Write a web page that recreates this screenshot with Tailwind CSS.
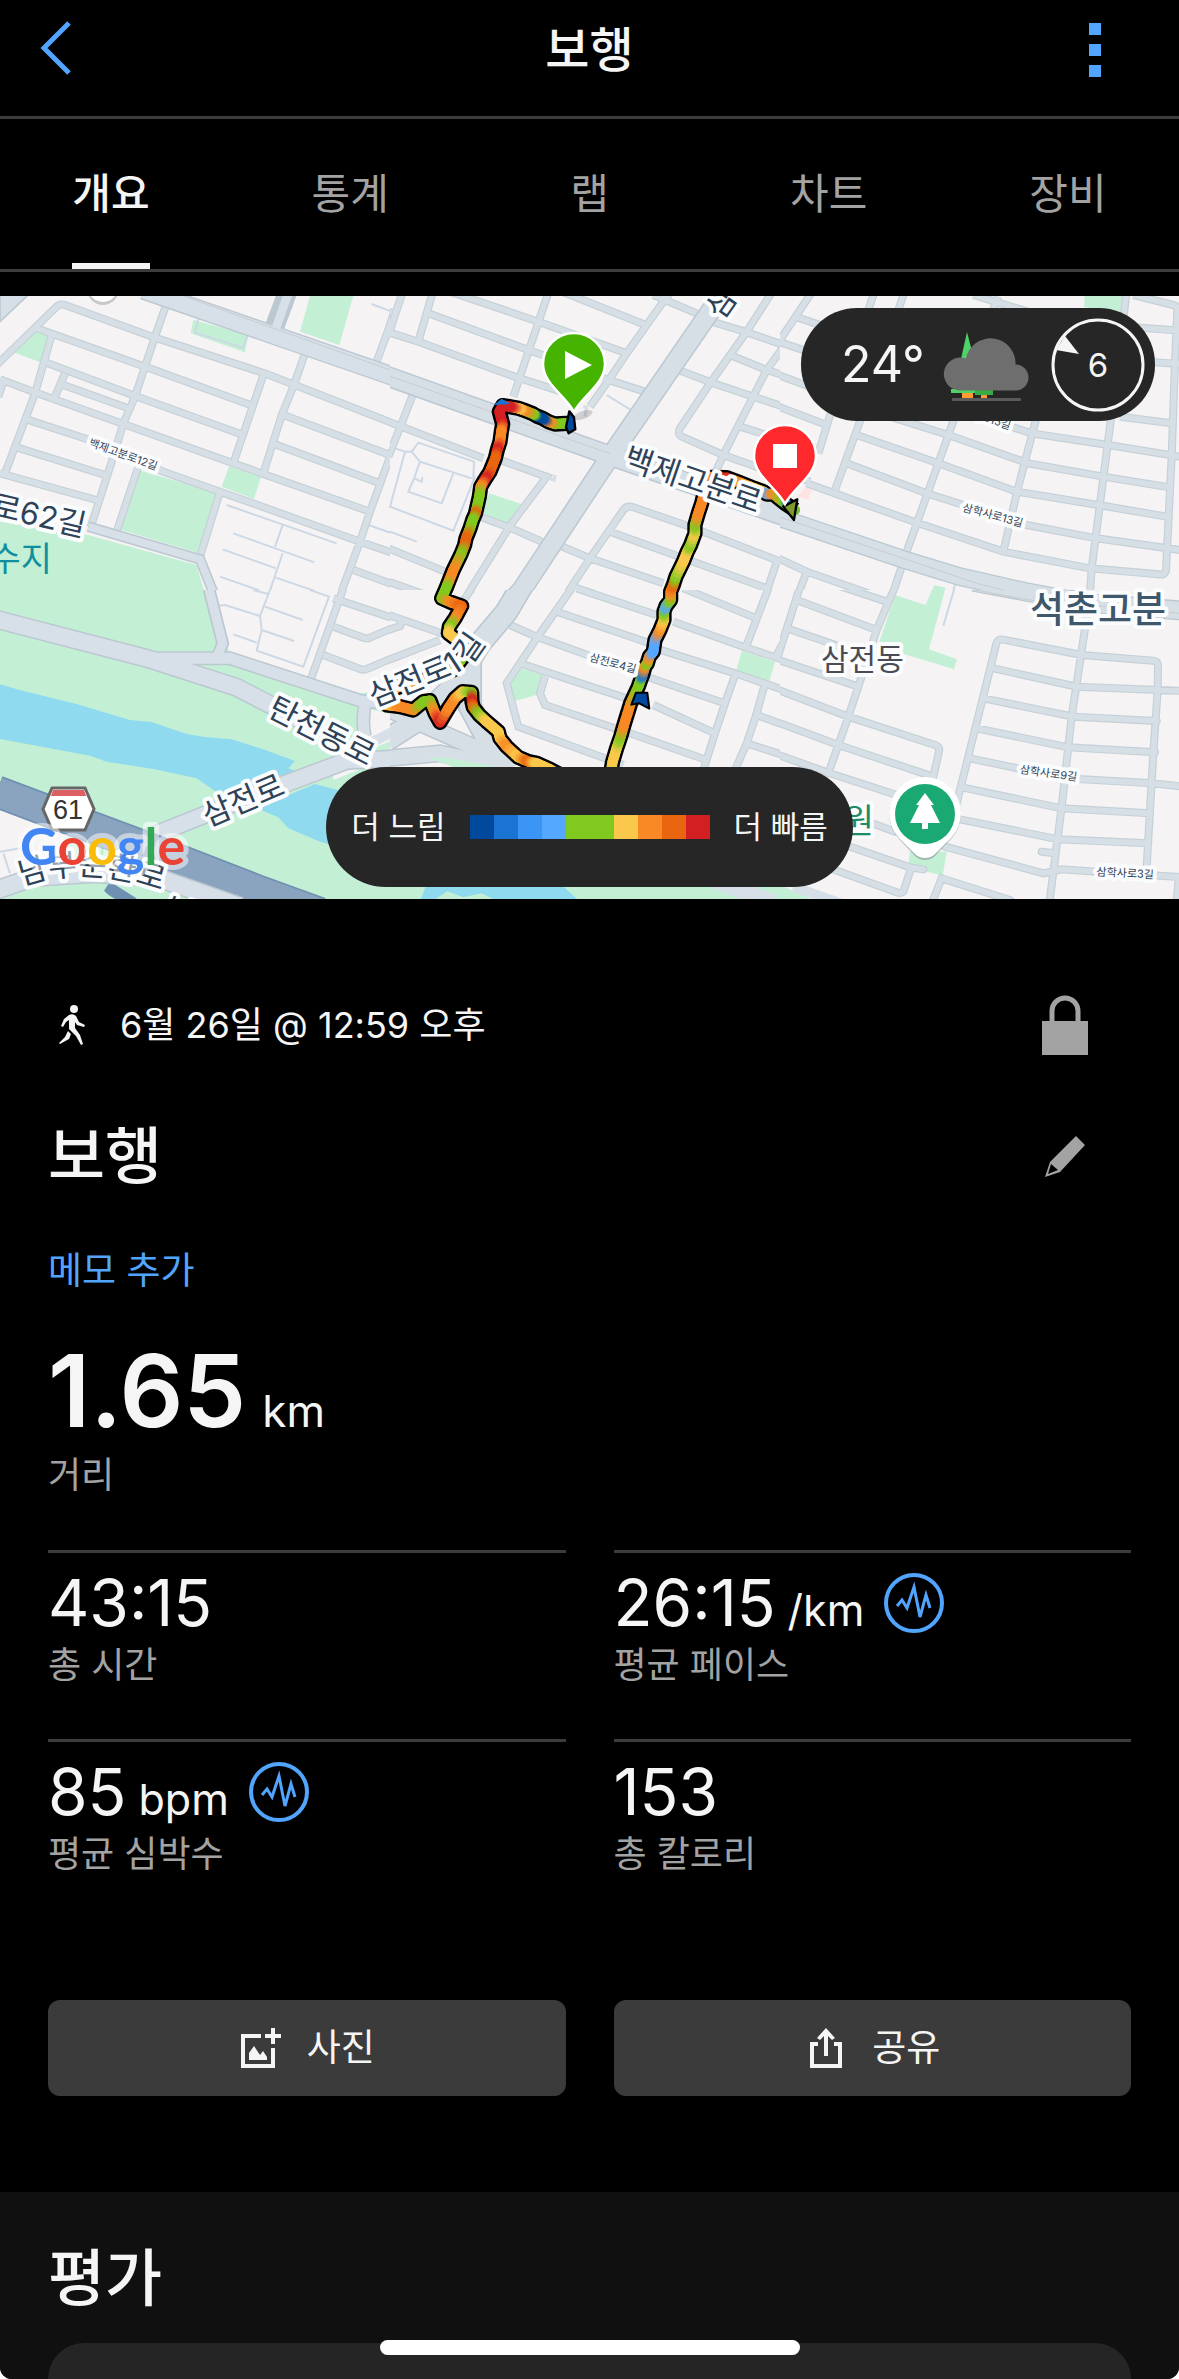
<!DOCTYPE html>
<html lang="ko">
<head>
    <meta charset="UTF-8">
    <meta name="viewport" content="width=device-width, initial-scale=1">
    <title>보행</title>
    <script src="https://cdn.jsdelivr.net/npm/@tailwindcss/browser@4"></script>
    <style>
        .halo text {
            paint-order: stroke;
            stroke: #fbfcfd;
            stroke-width: 8px;
            stroke-linejoin: round;
        }

        .case-st {
            stroke: #c5d0d7;
            stroke-width: 24;
        }

        .fill-st {
            stroke: #d6dfe6;
            stroke-width: 17;
        }
    </style>
</head>
<body class="bg-white font-['Inter','Noto_Sans_CJK_KR',sans-serif] text-[#f5f5f5]">

<div class="min-h-screen flex flex-col bg-black rounded-b-xl overflow-hidden">
    <header class="h-[119px] border-b-3 border-[#3c3c3c] flex items-start justify-between pl-10 pr-18 pt-4">
        <button aria-label="뒤로" class="w-12 h-16">
            <svg class="w-8 h-15" viewBox="0 0 32 60" fill="none" stroke="#51a5fe" stroke-width="5">
                <path d="M29 5 4 30 29 55"/>
            </svg>
        </button>
        <h1 class="text-[48px] leading-17 font-medium pl-8">보행</h1>
        <button aria-label="메뉴" class="w-12 h-16 flex flex-col items-center gap-[9px] pt-[7px] pl-6">
            <span class="w-3 h-3 shrink-0 bg-[#51a5fe]"></span>
            <span class="w-3 h-3 shrink-0 bg-[#51a5fe]"></span>
            <span class="w-3 h-3 shrink-0 bg-[#51a5fe]"></span>
        </button>
    </header>

    <nav class="h-[153px] border-b-3 border-[#3c3c3c] flex justify-between px-[72px] text-[42px] leading-[150px] text-center text-[#a3a3a3]">
        <a href="#" class="w-[78px] border-b-6 border-[#f5f5f5] text-[#f5f5f5] font-medium">개요</a>
        <a href="#" class="w-[78px]">통계</a>
        <a href="#" class="w-[78px]">랩</a>
        <a href="#" class="w-[78px]">차트</a>
        <a href="#" class="w-[78px]">장비</a>
    </nav>

    <!-- route map -->
    <section class="relative mt-6">
        <svg class="block w-full" viewBox="0 296 1179 603" fill="none" font-family="Inter, 'Noto Sans CJK KR', sans-serif">
            <rect y="296" width="1179" height="603" fill="#f5f3f4"/>

            <!-- tile 1 -->
            <svg x="0" y="290" width="400" height="310" viewBox="0 0 1200 930">
                <g fill="#c3f0d5">
                    <path d="M0 695 265 735 590 825 620 930H0zM580 90 745 135 735 187 572 130zM935 0H1065L1018 165 900 125zM100 122 150 138 125 218 40 187zM415 540 655 610 597 790 358 718zM687 528 783 560 762 627 665 590z"/>
                </g>
                <path d="M0 0H100L0 95z" fill="#d6dfe8" stroke="#bdc9d1" stroke-width="5"/>
                <g stroke="#cdd8e4" stroke-width="6">
                    <path d="M680 645 1010 760M700 730 943 817M668 778 828 835M660 860 803 910M848 705 825 770M848 790 800 930M825 862 1010 925M1105 705 1200 738M1210 550 1170 650 1210 664M1115 42 1175 65M597 78 585 128 728 173 745 130M860 45 878 52"/>
                </g>
                <g id="t1">
                    <path d="M-10 225 170 50Q180 40 195 45L465 143 800 252 1210 412M110 115 440 232 760 348M140 218 405 318 730 435M190 285 385 355M195 250 165 320M0 268 100 305 370 402 700 520 1110 665M80 388 260 447 490 545 660 605 1080 755 1210 800M50 472 315 555M0 550 290 630M155 135 105 310 15 550M10 275-5 320M500 40 465 140 405 320 370 400 340 500 272 712M415 530 350 725M660 605 600 800M790 255 700 520M915 190 880 290 845 375 790 550M850 375 1170 495M825 463 1140 580M1200 10 1165 120 1130 215M1165 130 1210 150M1210 395 1170 500 1110 665 1080 755 1015 930M1060 840 1210 895"/>
                </g>
                <use href="#t1" class="case-st"/>
                <use href="#t1" class="fill-st"/>
                <path d="M265 710 600 808 655 945" stroke="#bcc8d1" stroke-width="32"/>
                <path d="M265 710 600 808 655 945" stroke="#d7dfe8" stroke-width="23"/>
                <path d="M430 0 1210 270M865 0 822 115" stroke="#bcc8d1" stroke-width="58"/>
                <path d="M430 0 1210 270" stroke="#d7dfe8" stroke-width="50"/>
                <path d="M868 0 826 120" stroke="#d7dfe8" stroke-width="26"/>
                <path d="M500 0 1210 254" stroke="#c9ccd2" stroke-width="3"/>
            </svg>

            <!-- tile 2 -->
            <svg x="390" y="290" width="400" height="310" viewBox="0 0 1200 930">
                <rect width="1200" height="930" fill="#f5f3f4"/>
                <path d="M298 610 402 645 363 707 270 670z" fill="#c3f0d5"/>
                <g stroke="#cdd8e4" stroke-width="6">
                    <path d="M0 470 45 485 0 650 190 722 255 560M45 485 65 485 85 458 252 515 250 570M65 485 90 515 245 565M90 515 72 565 95 575 97 562M72 565 55 605 155 640 190 550M0 725 80 755M650 315 720 358"/>
                </g>
                <g id="t2">
                    <path d="M40 0-5 135M130 0 85 155M-10 125 85 155 380 262 560 320M115 70 415 180 560 230M150-5 445 95 710 190M-5 65 5 70M478 0 415 185 370 320M490-5 775 108M845 0 770 105 710 190 660 265 600 350M640 265 765 305M790 15 920 70M965 95 1065 125 1210 175M1150 0 1070 125 960 280 870 415Q860 435 880 442L1000 495 1210 570M865 240 970 280 1210 360M1210 130 1130 240 1000 495 975 550M1020 195 1130 240 1210 265M1050 410 1210 460M72 305 35 400-5 500M-5 395 280 505M330 510 470 560 365 700 225 925M270 680 365 715 455 755M600 805 515 935M600 805 700 660Q710 645 730 652L900 710 1210 830M660 725 1130 895M505 765 600 805 820 880M1160 815 1120 935M545 890 700 940M-5 775 165 845M-5 875 150 930"/>
                </g>
                <use href="#t2" class="case-st"/>
                <use href="#t2" class="fill-st"/>
                <path d="M580 350 590 352 585 380M478 565 492 570 495 555" stroke="#d6dfe6" stroke-width="10"/>
                <g stroke="#bcc8d1" stroke-width="62">
                    <path d="M-10 258 660 497 1210 688M1005 0 650 515 395 900 340 960"/>
                </g>
                <g stroke="#d7dfe6" stroke-width="53">
                    <path d="M-10 258 660 497 1210 688M1005 0 650 515 395 900 340 960"/>
                </g>
                <path d="M-10 255 660 491" stroke="#c9ccd2" stroke-width="3"/>
            </svg>

            <!-- tile 3 -->
            <svg x="780" y="290" width="400" height="310" viewBox="0 0 1200 930">
                <rect width="1200" height="930" fill="#f5f3f4"/>
                <path d="M340 915 390 930H340zM462 885 497 893 487 930H447zM915 0H1030L1025 75 912 50z" fill="#c3f0d5"/>
                <path d="M80 590 97 597 85 628 50 620z" fill="#fde3e4"/>
                <path d="M525 885 512 930" stroke="#cdd8e4" stroke-width="6"/>
                <g id="t3">
                    <path d="M100 0 0 150M-5 155 100 190M45 80 150 115M285 0 265 60M375 0 355 60M655 20 635 70M580 15 760 70M1040 0 1030 90M1060 15 1180 45Q1193 48 1192 60L1185 215 1175 500 1158 840Q1155 857 1135 853L930 835 670 785 415 700 80 580M1060 112 1200 122M1100 215 1200 222M-5 255 90 290M-5 350 140 405M155 360 115 490M245 380 165 600M525 380 380 785M370 815 330 935M770 380 710 610 670 785M995 370 935 835 928 935M630 390 755 430 985 465 1200 500M330 380 505 435 745 520 970 560 1170 592M230 435 475 520 710 605 955 645 1160 680M200 520 440 610 740 705 950 745 1200 780M1020 380 1175 400M-5 805 80 845 350 940M80 845 50 925M-5 540 90 575"/>
                </g>
                <use href="#t3" class="case-st"/>
                <use href="#t3" class="fill-st"/>
                <path d="M-10 680 370 808 540 860 740 905 930 940" stroke="#bcc8d1" stroke-width="56"/>
                <path d="M-10 680 370 808 540 860 740 905 930 940" stroke="#d7dfe6" stroke-width="48"/>
                <path d="M-10 678 370 805 590 880 740 918" stroke="#c9ccd2" stroke-width="3"/>
            </svg>

            <!-- tile 4 -->
            <svg x="0" y="590" width="400" height="320" viewBox="0 0 1200 960">
                <rect width="1200" height="960" fill="#c3f0d5"/>
                <path d="M635 0 690 195 930 270 1080 310 1200 300V0zM0 660 200 730 200 860 0 880zM1100 355 1200 380V440L1110 480zM1000 550 1100 530 1000 570z" fill="#f5f3f4"/>
                <path d="M0 283 70 303 230 342 390 390 455 396 560 432 620 442 695 448 790 478 885 513 865 535 900 550 680 620 640 600 590 565 460 537 320 515 270 497 0 447zM770 655 945 582 1050 610V780L960 755 865 715 835 682z" fill="#8fdaee"/>
                <g stroke="#cdd8e4" stroke-width="6">
                    <path d="M655 47 675 45 780 78M810 0 780 78 785 120 770 182 910 230 987 20 930 0M795 50 908 90M785 120 882 153M700 133 770 158M760 0 805 12M0 785 60 775M10 790 30 850"/>
                </g>
                <g id="t4">
                    <path d="M1030-5 930 275M1000 25 1210 95M1000 110 1090 143Q1100 147 1110 143L1210 100M970 195 1080 237Q1092 242 1105 235L1210 190"/>
                </g>
                <use href="#t4" class="case-st"/>
                <use href="#t4" class="fill-st"/>
                <g stroke="#bcc8d1">
                    <path d="M-10 88 440 205 710 292 900 390" stroke-width="58"/>
                    <path d="M440 205 690 205 1080 332 1210 345M1095 340Q1085 400 1095 440" stroke-width="42"/>
                    <path d="M625-10 668 160 650 205" stroke-width="38"/>
                    <path d="M400 760 620 672 860 580 1040 512 1210 505" stroke-width="56"/>
                </g>
                <g stroke="#d7dfe8">
                    <path d="M-10 88 440 205 710 292 900 390" stroke-width="49"/>
                    <path d="M440 205 690 205 1080 332 1210 345M1095 340Q1085 400 1095 440" stroke-width="33"/>
                    <path d="M625-10 668 160 650 205" stroke-width="28"/>
                    <path d="M400 760 620 672 860 580 1040 512 1210 505" stroke-width="47"/>
                </g>
                <path d="M1110 460 1210 410" stroke="#d7dfe8" stroke-width="30"/>
                <path d="M-10 605 150 665 420 765 780 905 960 970" stroke="#7090b2" stroke-width="98"/>
                <path d="M-10 605 150 665 420 765 780 905 960 970" stroke="#8aa3bf" stroke-width="88"/>
                <path d="M320 890 400 940" stroke="#7090b2" stroke-width="36"/>
                <path d="M-10 900 100 862 280 850 470 862 720 950" stroke="#bcc8d1" stroke-width="60"/>
                <path d="M-10 900 100 862 280 850 470 862 720 950" stroke="#d7dfe8" stroke-width="50"/>
                <path d="M90 925 180 905 310 900 340 930z" fill="#c3f0d5"/>
            </svg>

            <!-- tile 5 -->
            <svg x="390" y="590" width="400" height="320" viewBox="0 0 1200 960">
                <rect width="1200" height="960" fill="#f5f3f4"/>
                <path d="M388 235 460 255 440 315 375 333 358 290zM1055 182 1155 215 1137 277 1038 245zM0 800H1200V960H0z" fill="#c3f0d5"/>
                <path d="M110 880H510L562 928H310L275 910 220 922 172 904 135 928H93z" fill="#8fdaee"/>
                <path d="M930 850 1150 940" stroke="#d7dfe8" stroke-width="50"/>
                <g id="t5">
                    <path d="M-5 75 170 135M-5 210 150 150M-5 120 30 108 36 90M245-5 170 110M545-5 440 145 350 280 385 410 700 525M360 105 440 140 620 205M500 65 780 160M560-5 800 75M850 95 1060 170 1210 220M880-5 1100 85M1135-5 1070 165M1210 100 1155 205M780 170 1035 250 1210 310M390 220 710 325M465 260 450 310 465 345 720 430M770 260 1010 342M790 345 975 430M720 430 950 510M1035 255 1005 340 975 430 940 540M1125 280 1100 370 1070 460 1035 540M1100 375 1210 415M1070 460 1210 505"/>
                </g>
                <use href="#t5" class="case-st"/>
                <use href="#t5" class="fill-st"/>
                <g stroke="#bcc8d1">
                    <path d="M400-20 350 65 270 160 190 290 100 380-10 450M240 200 240 350 310 480 360 540" stroke-width="72"/>
                    <path d="M-10 355 80 395 350 515M-10 505 150 490 360 535" stroke-width="54"/>
                </g>
                <g stroke="#d7dfe6">
                    <path d="M400-20 350 65 270 160 190 290 100 380-10 450M240 200 240 350 310 480 360 540" stroke-width="62"/>
                    <path d="M-10 355 80 395 350 515M-10 505 150 490 360 535" stroke-width="45"/>
                </g>
                <path d="M115 503 170 503 340 535H200z" fill="#c3f0d5"/>
            </svg>

            <!-- tile 6 -->
            <svg x="780" y="590" width="400" height="320" viewBox="0 0 1200 960">
                <rect width="1200" height="960" fill="#f5f3f4"/>
                <path d="M345 15 437 45 455 0H495L447 178 531 208 522 238 350 185 298 155zM390 785H500L488 857 385 830zM0 885 100 930H0z" fill="#c3f0d5"/>
                <path d="M522 0 490 107" stroke="#cdd8e4" stroke-width="6"/>
                <path d="M40 890 180 940" stroke="#d7dfe8" stroke-width="30"/>
                <g id="t6">
                    <path d="M60-10-5 195M185-10 320 35M50 30 290 120M20 115 240 190M-5 210 235 290M-5 300 205 380 465 465Q480 470 477 485L460 560M-5 398 175 465 460 560M-5 495 150 550 350 615M345-10 290 120 235 290 205 380 145 550M250 690 345 725M180 760 390 832 430 838M150 835 345 905Q365 915 372 900L393 835M455 940 485 865 690 930M540 688 835 748 1105 760M495 770 790 850 845 838 950 845 1210 862M530 640 648 165Q652 145 670 149L905 195 1120 212Q1135 214 1134 230L1133 300 1120 490 1100 830M640 235 890 290 1210 303M610 325 880 380 1130 393M590 415 865 472 1125 487M570 505 855 565 1120 580 1210 590M550 593 845 655 1110 670M785 785 825 790M925 50 875 380 845 650 808 940M1197 860 1190 930"/>
                </g>
                <use href="#t6" class="case-st" stroke-linecap="round"/>
                <use href="#t6" class="fill-st" stroke-linecap="round"/>
                <path d="M580-25 740 5 930 40 1210 62" stroke="#bcc8d1" stroke-width="60"/>
                <path d="M580-25 740 5 930 40 1210 62" stroke="#d7dfe6" stroke-width="52"/>
                <path d="M560-5 750 30 930 45 1200 70" stroke="#c9ccd2" stroke-width="3"/>
            </svg>

            <circle cx="103" cy="289" r="16" fill="#c6c8ca"/>
            <circle cx="103" cy="287" r="15" fill="#fff"/>

            <!-- speed track, filled in by the script below -->
            <g id="track" transform="translate(390 290) scale(.3333)" stroke-linejoin="round"></g>

            <path id="ringRoad" d="M22 886Q85 862 168 893"/>
            <g class="halo" fill="#2e4257">
                <g font-size="11" text-anchor="middle">
                    <text transform="translate(122 458) rotate(20)">백제고분로12길</text>
                    <text transform="translate(992 519) rotate(15)">삼학사로13길</text>
                    <text transform="translate(980 420) rotate(18)">삼학사로15길</text>
                    <text transform="translate(612 667) rotate(15)">삼전로4길</text>
                    <text transform="translate(1048 777) rotate(8)">삼학사로9길</text>
                    <text transform="translate(1125 877) rotate(3)">삼학사로3길</text>
                </g>
                <g font-size="31">
                    <text transform="translate(83 537) rotate(13)" text-anchor="end">로62길</text>
                    <text transform="translate(722 321) rotate(-55)">삼학사로</text>
                    <text transform="translate(622 467) rotate(19)">백제고분로</text>
                    <text transform="translate(374 707) rotate(-22)">삼전로</text>
                    <text transform="translate(453 676) rotate(-33)">1</text>
                    <text transform="translate(470 666) rotate(-55)">길</text>
                    <text transform="translate(266 715) rotate(27)">탄천동로</text>
                    <text transform="translate(208 827) rotate(-23)">삼전로</text>
                    <text><textPath href="#ringRoad">남부순환로</textPath></text>
                    <text transform="translate(162 917) rotate(22)">남부</text>
                </g>
                <text x="52" y="571" font-size="34" text-anchor="end" fill="#0f8fa0" style="stroke: none">수지</text>
                <text x="821" y="670" font-size="30" fill="#4b4b55">삼전동</text>
                <text x="1030" y="623" font-size="37" font-weight="500" fill="#3f576b">석촌고분</text>
                <text x="874" y="833" font-size="34" text-anchor="end" fill="#1c8c67">원</text>
            </g>

            <!-- route shield -->
            <path d="M52 788H85L94 809 85 830H52L43 809z" fill="#fff" stroke="#666" stroke-width="3"/>
            <path d="M53 790H84L86 796H51z" fill="#dc6063"/>
            <text x="68" y="819" font-size="27" text-anchor="middle" fill="#333" font-family="'Liberation Sans', sans-serif">61</text>

            <text x="20" y="865" font-size="52" font-family="Lato, sans-serif" font-weight="700" paint-order="stroke" stroke="#fff" stroke-opacity=".5" stroke-width="10" stroke-linejoin="round"><tspan fill="#4285f4">G</tspan><tspan fill="#ea4335">o</tspan><tspan fill="#fbbc05">o</tspan><tspan fill="#4285f4">g</tspan><tspan fill="#34a853">l</tspan><tspan fill="#ea4335">e</tspan></text>

            <!-- start / finish pins -->
            <ellipse cx="583" cy="415" rx="10" ry="4" transform="rotate(-20 583 415)" fill="#000" opacity=".15"/>
            <path d="M574 412C566 396 543 384 543 364A31 31 0 0 1 605 364C605 384 582 396 574 412z" fill="#46b300" stroke="#fff" stroke-width="2.5"/>
            <path d="M565 351 592 365 565 379z" fill="#fff"/>
            <path d="M785 504C777 488 754 476 754 456A31 31 0 0 1 816 456C816 476 793 488 785 504z" fill="#ff282c" stroke="#fff" stroke-width="2.5"/>
            <path d="M773 444H797V468H773z" fill="#fff"/>

            <!-- park marker -->
            <path d="M925 860Q919 860 915 856L899 839A36 36 0 1 1 951 839L935 856Q931 860 925 860z" fill="#8b9195" opacity=".6"/>
            <path d="M925 858Q919 858 915 854L899 838A36 36 0 1 1 951 838L935 854Q931 858 925 858z" fill="#fff"/>
            <circle cx="925" cy="814" r="30" fill="#1aa873"/>
            <path d="M925 793 934 805H931L940 823H928V829H922V823H910L919 805H916z" fill="#fff"/>
        </svg>

        <div class="absolute top-3 right-6 w-[354px] h-[113px] rounded-[56px] bg-[#262626] flex items-center pl-10 gap-4">
            <span class="text-[50px]">24°</span>
            <svg class="w-[88px] h-[72px] shrink-0" viewBox="942 328 88 72">
                <path d="M968 331 976 362 962 358z" fill="#4fd267"/>
                <path d="M952 388H984V392H952z" fill="#4fd267"/>
                <path d="M976 388H994V394H976z" fill="#36ac46"/>
                <path d="M963 392H974V397H963zM982 394H988V397H982z" fill="#fe9a33"/>
                <rect x="953" y="397" width="69" height="3" rx="1" fill="#5a5a5a"/>
                <path d="M961 389.500A16.500 16.500 0 1 1 967 357.500 25 25 0 0 1 1016.500 363.500 13 13 0 0 1 1016.500 389.500z" fill="#6e6e6e"/>
            </svg>
            <svg class="w-[96px] h-[96px] shrink-0 absolute right-[9px]" viewBox="0 0 96 96">
                <circle cx="48" cy="48" r="45" fill="none" stroke="#f5f5f5" stroke-width="3"/>
                <path d="M15 19 29 37 6 33z" fill="#f5f5f5"/>
                <text x="48" y="60" font-size="33" text-anchor="middle" fill="#f5f5f5" font-family="Inter, sans-serif">6</text>
            </svg>
        </div>

        <div class="absolute bottom-3 left-[326px] w-[527px] h-30 rounded-[60px] bg-[#262626] flex items-center justify-center gap-6 text-[31px] whitespace-nowrap">
            <span>더 느림</span>
            <div class="flex">
                <span class="w-6 h-6 bg-[#00499c]"></span>
                <span class="w-6 h-6 bg-[#1a75d2]"></span>
                <span class="w-6 h-6 bg-[#3b95f5]"></span>
                <span class="w-6 h-6 bg-[#55a8ff]"></span>
                <span class="w-12 h-6 bg-[#80c91e]"></span>
                <span class="w-6 h-6 bg-[#fac94b]"></span>
                <span class="w-6 h-6 bg-[#f98924]"></span>
                <span class="w-6 h-6 bg-[#e9650f]"></span>
                <span class="w-6 h-6 bg-[#d41f22]"></span>
            </div>
            <span>더 빠름</span>
        </div>
    </section>

    <main class="px-12 pt-24 pb-24">
        <div class="flex items-center h-15">
            <svg class="w-12 h-12 shrink-0" viewBox="48 1001 48 48" fill="#f5f5f5">
                <circle cx="74" cy="1009" r="4"/>
                <path d="M69 1015Q73 1013 76 1016L79 1022 85 1025 84 1027 77 1025 75 1022V1028L80 1035 83 1044 81 1045 76 1036 69 1029V1020L66 1022 63 1027 61 1026 64 1019z"/>
                <path d="M68 1031 71 1034 69 1039 60 1044 59 1043 65 1037z"/>
            </svg>
            <p class="pl-6 text-[36px]">6월 26일 @ 12:59 오후</p>
            <button aria-label="비공개" class="ml-auto mr-[42px]">
                <svg class="w-12 h-15" viewBox="0 0 48 60">
                    <path d="M11 28V16A13 13 0 0 1 37 16V28" fill="none" stroke="#a3a3a3" stroke-width="5"/>
                    <path d="M1 26H47V60H1z" fill="#a3a3a3"/>
                </svg>
            </button>
        </div>

        <div class="flex items-center h-15 mt-18">
            <h2 class="text-[62px] leading-15 font-medium">보행</h2>
            <button aria-label="이름 편집" class="ml-auto mr-11">
                <svg class="w-11 h-11" viewBox="1043 1136 44 44" fill="#a3a3a3">
                    <path fill-rule="evenodd" d="M1076 1137 1085 1146 1060 1173 1045 1178 1050 1163zM1051 1165 1048 1175 1058 1171z"/>
                </svg>
            </button>
        </div>

        <p class="mt-15 text-[37px] leading-12"><a href="#" class="text-[#51a5fe]">메모 추가</a></p>

        <p class="mt-12 leading-24 text-[100px] font-semibold">1.65<span class="text-[44px] leading-none font-normal pl-4">km</span></p>
        <p class="mt-3 text-[36px] leading-12 text-[#a3a3a3]">거리</p>

        <div class="grid grid-cols-2 gap-x-12 mt-[51px]">
            <div class="border-t-3 border-[#3c3c3c] pt-5 pb-[50px]">
                <p class="h-15 leading-15 text-[64px]">43:15</p>
                <p class="mt-2 text-[36px] leading-12 text-[#a3a3a3]">총 시간</p>
            </div>
            <div class="border-t-3 border-[#3c3c3c] pt-5 pb-[50px]">
                <div class="flex items-center gap-5">
                    <p class="h-15 leading-15 text-[64px]">26:15<span class="text-[43px] leading-none pl-3">/km</span></p>
                    <svg class="w-15 h-15" viewBox="0 0 60 60" fill="none" stroke="#51a5fe">
                        <circle cx="30" cy="30" r="28" stroke-width="4"/>
                        <path id="pulse" d="M13 33 18 27 23 35 30 14 36 44 42 22 46 35" stroke-width="3"/>
                    </svg>
                </div>
                <p class="mt-2 text-[36px] leading-12 text-[#a3a3a3]">평균 페이스</p>
            </div>
            <div class="border-t-3 border-[#3c3c3c] pt-5 pb-[50px]">
                <div class="flex items-center gap-5">
                    <p class="h-15 leading-15 text-[64px]">85<span class="text-[43px] leading-none pl-3">bpm</span></p>
                    <svg class="w-15 h-15" viewBox="0 0 60 60" fill="none" stroke="#51a5fe">
                        <circle cx="30" cy="30" r="28" stroke-width="4"/>
                        <use href="#pulse"/>
                    </svg>
                </div>
                <p class="mt-2 text-[36px] leading-12 text-[#a3a3a3]">평균 심박수</p>
            </div>
            <div class="border-t-3 border-[#3c3c3c] pt-5 pb-[50px]">
                <p class="h-15 leading-15 text-[64px]">153</p>
                <p class="mt-2 text-[36px] leading-12 text-[#a3a3a3]">총 칼로리</p>
            </div>
        </div>

        <div class="grid grid-cols-2 gap-12 mt-18">
            <button class="h-24 rounded-xl bg-[#3b3b3b] flex items-center justify-center gap-6 text-[37px]">
                <svg class="w-11 h-11" viewBox="241 2024 44 44" fill="#f5f5f5">
                    <path d="M243 2032H263V2036H247V2062H273V2046H277V2066H243z"/>
                    <path d="M273 2026H277V2032H283V2036H277V2042H273V2036H267V2032H273z"/>
                    <path d="M251 2058V2051L256 2044 262 2053 265 2049 269 2055V2058z"/>
                </svg>
                사진
            </button>
            <button class="h-24 rounded-xl bg-[#3b3b3b] flex items-center justify-center gap-6 text-[37px]">
                <svg class="w-11 h-11" viewBox="804 2024 44 44" fill="#f5f5f5">
                    <path d="M810 2040H818V2044H814V2062H838V2044H834V2040H842V2066H810z"/>
                    <path d="M826 2026 835 2036 832 2038 828 2034V2054H824V2034L820 2038 817 2036z"/>
                </svg>
                공유
            </button>
        </div>
    </main>

    <section class="grow flex flex-col bg-[#101010] px-12 pt-[51px]">
        <h2 class="text-[62px] leading-18 font-medium">평가</h2>
        <div class="grow mt-7 rounded-t-[36px] bg-[#252525]"></div>
    </section>
</div>

<div class="fixed bottom-6 left-1/2 -translate-x-1/2 w-[420px] h-[15px] rounded-full bg-white"></div>

<script>
    const G = [128, 201, 30], Y = [250, 201, 75], O = [249, 137, 36], D = [233, 101, 15],
        R = [212, 31, 34], B = [85, 168, 255], M = [26, 117, 210], N = [0, 73, 156];

    // x, y, speed colour
    const points = [
        [540, 400, G], [530, 400, G], [495, 402, G], [475, 395, O], [458, 385, N], [440, 378, N], [430, 372, G], [400, 360, O],
        [385, 355, Y], [360, 350, R], [338, 347, R], [328, 365, R], [338, 402, R], [334, 425, O], [330, 455, O], [322, 480, R],
        [316, 505, D], [300, 545, D], [285, 568, R], [272, 590, O], [268, 620, G], [260, 655, G], [256, 672, D], [248, 690, G],
        [240, 715, G], [228, 745, D], [224, 765, D], [212, 795, G], [190, 840, O], [178, 870, O], [168, 895, G], [155, 925, G],
        [185, 938, O], [215, 948, D], [195, 985, O], [178, 1010, G], [175, 1030, Y], [215, 1060, Y], [232, 1085, G], [190, 1140, G],
        [140, 1160, O], [30, 1190, O], [0, 1200, Y], [-10, 1245, Y], [30, 1250, O], [70, 1260, O], [100, 1235, G], [120, 1232, G],
        [135, 1270, O], [150, 1297, R], [175, 1255, O], [195, 1225, O], [218, 1205, Y], [245, 1207, G], [246, 1235, R], [250, 1252, D],
        [268, 1275, G], [290, 1295, Y], [325, 1325, Y], [330, 1345, Y], [350, 1370, O], [385, 1402, Y], [415, 1415, D], [440, 1420, Y],
        [480, 1438, Y], [560, 1480, Y], [660, 1460, G], [668, 1415, Y], [680, 1375, Y], [692, 1340, G], [702, 1305, O],
        [722, 1240, O], [745, 1190, G], [752, 1170, G], [758, 1155, M], [765, 1130, O], [772, 1120, G], [778, 1100, O], [790, 1085, B],
        [795, 1050, B], [810, 1020, O], [822, 990, Y], [822, 965, G], [828, 948, B], [842, 930, G], [842, 905, O], [850, 885, D],
        [858, 860, G], [880, 815, Y], [892, 785, Y], [902, 765, G], [915, 730, Y], [915, 705, G], [925, 670, O], [935, 640, O],
        [945, 600, O], [962, 562, O], [1010, 563, R], [1050, 578, O], [1085, 592, Y], [1120, 605, Y], [1130, 612, B], [1150, 612, O],
        [1185, 640, G], [1200, 650, M], [1215, 660, G]
    ];
    const track = document.getElementById('track');
    let svg = `<polyline points="${points.map(p => p[0] + ',' + p[1]).join(' ')}" stroke="#000" stroke-width="46"/>`;
    for (let i = 1; i < points.length; i++) {
        const [x1, y1, c1] = points[i - 1], [x2, y2, c2] = points[i];
        const steps = 4;
        for (let s = 0; s < steps; s++) {
            const t = s / steps, u = (s + 1) / steps;
            const c = c1.map((v, k) => Math.round(v + (c2[k] - v) * (t + u) / 2));
            svg += `<path d="M${x1 + (x2 - x1) * t} ${y1 + (y2 - y1) * t}L${x1 + (x2 - x1) * u} ${y1 + (y2 - y1) * u}" stroke="rgb(${c})" stroke-width="31" stroke-linecap="round"/>`;
        }
    }
    svg += '<path d="M538 364 552 382 556 418 536 430 528 412z" fill="#00499c" stroke="#000" stroke-width="7"/>';
    svg += '<path d="M312 345 335 326 362 342z" fill="#1a75d2"/>';
    svg += '<path d="M738 1208 772 1208 778 1256 748 1240 724 1244z" fill="#00499c" stroke="#000" stroke-width="6"/>';
    svg += '<path d="M1180 650 1222 628 1212 690z" fill="#7d9a2c" stroke="#000" stroke-width="7"/>';
    track.innerHTML = svg;
</script>

</body>
</html>
